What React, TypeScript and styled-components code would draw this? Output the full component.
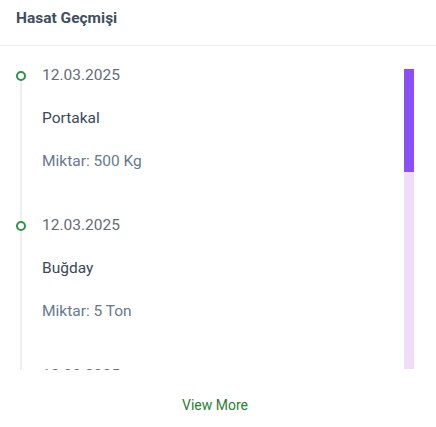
import React from 'react';
import styled, { createGlobalStyle } from 'styled-components';

const GlobalStyle = createGlobalStyle`
  body {
    margin: 0;
    background: #ffffff;
    font-family: Roboto, "Liberation Sans", sans-serif;
  }
`;

const Card = styled.div`
  width: 436px;
  height: 427px;
  background: #ffffff;
  display: flex;
  flex-direction: column;
`;

const Header = styled.div`
  height: 46px;
  padding: 0 16px 10px;
  display: flex;
  align-items: center;
  box-sizing: border-box;
  border-bottom: 1px solid #ececec;
`;

const Title = styled.h3`
  margin: 0;
  font-size: 15.5px;
  font-weight: 700;
  color: #404e5e;
`;

const Body = styled.div`
  position: relative;
  padding: 20px 22px 0 16px;
`;

const Scroller = styled.div`
  height: 304px;
  overflow-y: auto;
  scrollbar-width: none;
  &::-webkit-scrollbar {
    display: none;
  }
`;

const Track = styled.div`
  position: absolute;
  right: 22px;
  top: 23px;
  width: 10px;
  height: 300px;
  background: #f0dcf6;
`;

const Thumb = styled.div`
  width: 100%;
  background: #8a4ff6;
`;

const Item = styled.div`
  position: relative;
  padding-left: 26px;
  padding-bottom: 46px;

  &::before {
    content: '';
    position: absolute;
    left: 4px;
    top: 6px;
    bottom: -6px;
    width: 2px;
    background: #eeeeee;
  }
`;

const Dot = styled.span`
  position: absolute;
  left: 0;
  top: 5px;
  width: 6px;
  height: 6px;
  border: 2px solid #2f9443;
  border-radius: 50%;
  background: #ffffff;
  z-index: 1;
`;

const Line = styled.div<{ $tone: 'date' | 'name' | 'amount' }>`
  font-size: 15.5px;
  line-height: 18px;
  margin-bottom: 25px;
  color: ${(p) => (p.$tone === 'name' ? '#3b4858' : p.$tone === 'date' ? '#636c76' : '#687a8c')};
  &:last-child {
    margin-bottom: 0;
  }
`;

const Footer = styled.div`
  flex: 1;
  display: flex;
  justify-content: center;
  align-items: center;
  padding: 12px 6px 0 0;
`;

const MoreLink = styled.button`
  border: none;
  background: none;
  font-family: inherit;
  font-size: 14px;
  color: #2e7d32;
  cursor: pointer;
  padding: 0;
`;

const harvests = [
  { date: '12.03.2025', crop: 'Portakal', amount: '500 Kg' },
  { date: '12.03.2025', crop: 'Buğday', amount: '5 Ton' },
  { date: '12.03.2025', crop: 'Elma', amount: '2 Ton' },
  { date: '12.03.2025', crop: 'Mısır', amount: '3 Ton' },
  { date: '12.03.2025', crop: 'Arpa', amount: '1 Ton' },
  { date: '12.03.2025', crop: 'Domates', amount: '800 Kg' },
];

export default function App() {
  const visible = 300;
  const content = harvests.length * 146;
  const thumb = Math.round((visible / content) * visible);
  return (
    <Card>
      <GlobalStyle />
      <Header>
        <Title>Hasat Geçmişi</Title>
      </Header>
      <Body>
        <Scroller>
          {harvests.map((h, i) => (
            <Item key={i}>
              <Dot />
              <Line $tone="date">{h.date}</Line>
              <Line $tone="name">{h.crop}</Line>
              <Line $tone="amount">Miktar: {h.amount}</Line>
            </Item>
          ))}
        </Scroller>
        <Track>
          <Thumb style={{ height: thumb }} />
        </Track>
      </Body>
      <Footer>
        <MoreLink>View More</MoreLink>
      </Footer>
    </Card>
  );
}
